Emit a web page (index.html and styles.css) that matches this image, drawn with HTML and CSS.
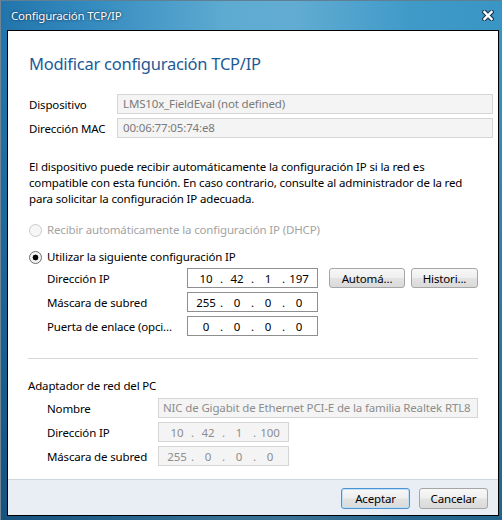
FILE: index.html
```html
<!DOCTYPE html>
<html lang="es">
<head>
<meta charset="utf-8">
<title>Configuración TCP/IP</title>
<link rel="stylesheet" href="styles.css">
</head>
<body>
<div class="window">
  <div class="titlebar">
    <span class="title">Configuración TCP/IP</span>
    <svg class="close" width="12" height="11" viewBox="0 0 12 11" aria-label="Cerrar">
      <path d="M2.5 2 L9.5 9 M9.5 2 L2.5 9" stroke="#1d3b57" stroke-width="4.6" stroke-linecap="square" fill="none"/>
      <path d="M2.5 2 L9.5 9 M9.5 2 L2.5 9" stroke="#ffffff" stroke-width="2.4" stroke-linecap="square" fill="none"/>
    </svg>
  </div>
  <div class="client">
    <div class="content">
      <h1 class="heading">Modificar configuración TCP/IP</h1>

      <div class="rows info">
        <div class="row">
          <span class="label lbl-info">Dispositivo</span>
          <div class="field disabled field-wide">LMS10x_FieldEval (not defined)</div>
        </div>
        <div class="row">
          <span class="label lbl-info">Dirección MAC</span>
          <div class="field disabled field-wide">00:06:77:05:74:e8</div>
        </div>
      </div>

      <p class="desc">El dispositivo puede recibir automáticamente la configuración IP si la red es<br>compatible con esta función. En caso contrario, consulte al administrador de la red<br>para solicitar la configuración IP adecuada.</p>

      <div class="radio radio-disabled radio-first"><span class="radio-mark"></span>Recibir automáticamente la configuración IP (DHCP)</div>
      <div class="radio radio-checked"><span class="radio-mark"></span>Utilizar la siguiente configuración IP</div>

      <div class="rows ip-rows">
        <div class="row">
          <span class="label lbl-ip">Dirección IP</span>
          <div class="ipbox"><span class="oct">10</span><span class="dot">.</span><span class="oct">42</span><span class="dot">.</span><span class="oct">1</span><span class="dot">.</span><span class="oct">197</span></div>
          <div class="btns">
            <span class="btn btn-auto">Automá...</span>
            <span class="btn btn-hist">Histori...</span>
          </div>
        </div>
        <div class="row">
          <span class="label lbl-ip">Máscara de subred</span>
          <div class="ipbox"><span class="oct">255</span><span class="dot">.</span><span class="oct">0</span><span class="dot">.</span><span class="oct">0</span><span class="dot">.</span><span class="oct">0</span></div>
        </div>
        <div class="row">
          <span class="label lbl-ip">Puerta de enlace (opci...</span>
          <div class="ipbox"><span class="oct">0</span><span class="dot">.</span><span class="oct">0</span><span class="dot">.</span><span class="oct">0</span><span class="dot">.</span><span class="oct">0</span></div>
        </div>
      </div>

      <div class="sep"></div>

      <div class="section-title">Adaptador de red del PC</div>

      <div class="rows adapter-rows">
        <div class="row">
          <span class="label lbl-adapter">Nombre</span>
          <div class="field disabled field-name">NIC de Gigabit de Ethernet PCI-E de la familia Realtek RTL8</div>
        </div>
        <div class="row">
          <span class="label lbl-adapter">Dirección IP</span>
          <div class="ipbox ipbox-disabled"><span class="oct">10</span><span class="dot">.</span><span class="oct">42</span><span class="dot">.</span><span class="oct">1</span><span class="dot">.</span><span class="oct">100</span></div>
        </div>
        <div class="row">
          <span class="label lbl-adapter">Máscara de subred</span>
          <div class="ipbox ipbox-disabled"><span class="oct">255</span><span class="dot">.</span><span class="oct">0</span><span class="dot">.</span><span class="oct">0</span><span class="dot">.</span><span class="oct">0</span></div>
        </div>
      </div>
    </div>

    <div class="footer">
      <span class="btn btn-footer btn-default">Aceptar</span>
      <span class="btn btn-footer">Cancelar</span>
    </div>
  </div>
</div>
</body>
</html>
```

FILE: styles.css
```css
* { box-sizing: border-box; }

html, body {
  margin: 0;
  padding: 0;
}

body {
  width: 502px;
  height: 520px;
  overflow: hidden;
  font-family: "Noto Sans", "Open Sans", sans-serif;
  font-size: 11.5px;
  letter-spacing: -0.15px;
  color: #000;
}

.window {
  width: 502px;
  height: 520px;
  display: flex;
  flex-direction: column;
  border-left: 1px solid #6d8595;
  border-top: 1px solid #5f7f93;
  background:
    linear-gradient(to bottom, rgba(8, 40, 70, 0) 0px, rgba(8, 40, 70, 0) 40px, rgba(8, 40, 70, 0.45) 100%),
    linear-gradient(to right, #2275ab 0%, #358bbf 18%, #5eabd2 45%, #62acd2 58%, #3f9ac8 82%, #3995c4 100%);
}

.titlebar {
  height: 29px;
  flex: none;
  display: flex;
  align-items: center;
  justify-content: space-between;
  padding: 0 8px 0 10px;
}

.title {
  color: #fff;
  font-size: 11.5px;
  letter-spacing: -0.2px;
  line-height: 16px;
  margin-top: 1px;
  text-shadow: 0 0 3px rgba(10, 30, 60, 0.75), 0 0 1px rgba(10, 30, 60, 0.6);
}

.close {
  display: block;
}

.client {
  flex: none;
  height: 486px;
  margin: 0 3px 0 6px;
  border: 1px solid #000;
  background: #fff;
  display: flex;
  flex-direction: column;
}

.content {
  flex: 1;
  padding: 0 19px 0 21px;
}

.heading {
  margin: 21px 0 0 0;
  font-size: 16.5px;
  letter-spacing: -0.25px;
  line-height: 24px;
  font-weight: normal;
  color: #1c5a96;
  white-space: nowrap;
}

.rows {
  display: flex;
  flex-direction: column;
  gap: 4px;
}

.row {
  display: flex;
  align-items: center;
  height: 20px;
  white-space: nowrap;
}

.info {
  margin-top: 18px;
}

.label {
  flex: none;
  line-height: 16px;
  padding-top: 1px;
  overflow: hidden;
}

.lbl-info { width: 88px; }
.lbl-ip { width: 140px; }
.lbl-adapter { width: 111px; }

.field {
  height: 20px;
  line-height: 18px;
  padding: 0 5px;
  border: 1px solid #d5d5d5;
  background: #f4f4f4;
  color: #7a7a7a;
  overflow: hidden;
  white-space: nowrap;
  flex: none;
}

.field-wide { width: 376px; }
.field-name { width: 320px; color: #8d8d8d; padding: 0 4px; }

.desc {
  margin: 21px 0 0 0;
  line-height: 16px;
  white-space: nowrap;
}

.radio {
  display: flex;
  align-items: center;
  height: 16px;
  line-height: 16px;
  white-space: nowrap;
}

.radio-first { margin-top: 15px; }
.radio-checked { margin-top: 11px; }

.radio-mark {
  width: 13px;
  height: 13px;
  border-radius: 50%;
  margin-right: 5px;
  flex: none;
}

.radio-disabled { color: #a3a3a3; }

.radio-disabled .radio-mark {
  border: 1px solid #c9c9c9;
  background: #f6f6f6;
}

.radio-checked .radio-mark {
  border: 1px solid #6a6a6a;
  background: radial-gradient(circle, #000 0px, #000 2.6px, #f0f0f0 3.2px, #fafafa 100%);
}

.ip-rows {
  margin-top: 3px;
  margin-left: 18px;
}

.ipbox {
  flex: none;
  width: 131px;
  height: 20px;
  border: 1px solid #8f8f8f;
  background: #fff;
  display: flex;
  justify-content: center;
  align-items: center;
  line-height: 18px;
  padding-top: 1px;
}

.ipbox-disabled {
  border-color: #d5d5d5;
  background: #f4f4f4;
  color: #8d8d8d;
}

.oct {
  width: 25px;
  text-align: center;
}

.dot {
  width: 6px;
  text-align: center;
}

.btns {
  display: flex;
  gap: 6px;
  margin-left: 11px;
}

.btn {
  display: flex;
  align-items: center;
  justify-content: center;
  height: 20px;
  border: 1px solid #a6a6a6;
  border-radius: 3px;
  background: linear-gradient(to bottom, #f7f7f7 0%, #efefef 48%, #e3e3e3 52%, #dadada 100%);
  color: #000;
  white-space: nowrap;
}

.btn-auto { width: 76px; }
.btn-hist { width: 67px; }

.sep {
  height: 1px;
  background: #d8d8d8;
  margin: 22px 0 0 -1px;
  width: 450px;
}

.section-title {
  margin: 19px 0 0 -1px;
  line-height: 16px;
}

.adapter-rows {
  margin-top: 4px;
  margin-left: 18px;
}

.footer {
  flex: none;
  height: 36px;
  border-top: 1px solid #cfd6dc;
  background: #e8eef4;
  display: flex;
  justify-content: flex-end;
  align-items: flex-start;
  gap: 9px;
  padding: 8px 10px 0 0;
}

.btn-footer {
  width: 69px;
  height: 21px;
}

.btn-default {
  border-color: #4a94d4;
  box-shadow: inset 0 0 0 1px #bfe0f7;
}
```
